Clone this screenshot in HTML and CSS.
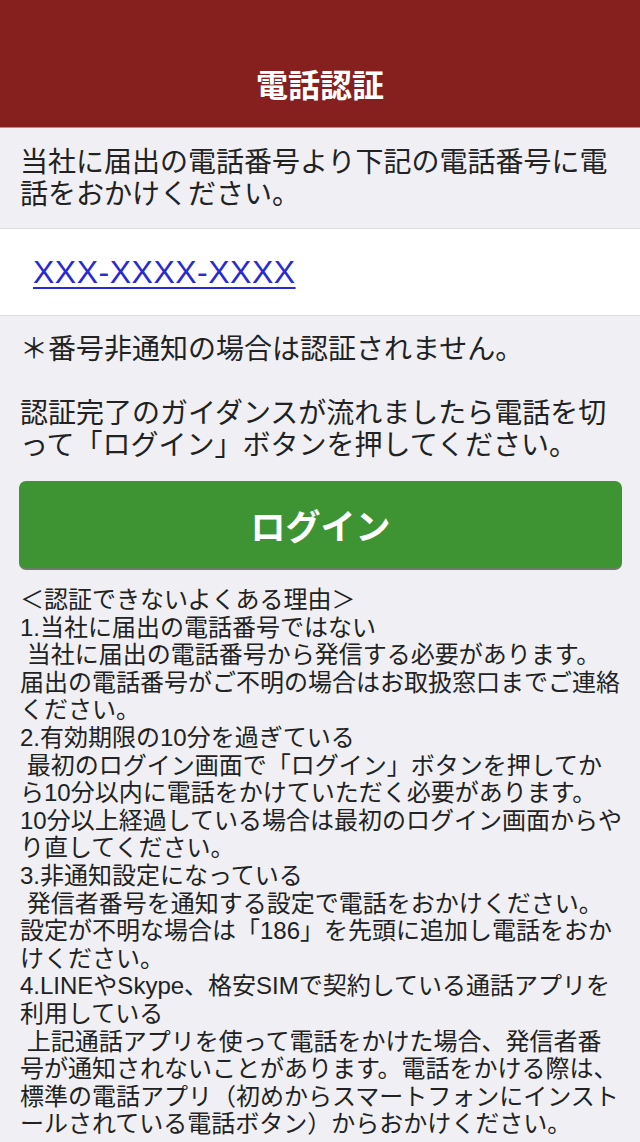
FILE: index.html
```html
<!DOCTYPE html>
<html lang="ja">
  <head>
    <meta charset="utf-8">
    <title>電話認証</title>
    <link rel="stylesheet" href="styles.css">
  </head>
  <body>
    <header class="header">
      <h1>電話認証</h1>
    </header>
    <section class="intro">
      <p>当社に届出の電話番号より下記の電話番号に電話をおかけください。</p>
    </section>
    <section class="tel">
      <a href="tel:XXX-XXXX-XXXX">XXX-XXXX-XXXX</a>
    </section>
    <section class="notice">
      <p>＊番号非通知の場合は認証されません。</p>
      <p class="guide">認証完了のガイダンスが流れましたら電話を切って「ログイン」ボタンを押してください。</p>
      <button class="login" type="button">ログイン</button>
      <div class="reasons">
        ＜認証できないよくある理由＞<br>
        1.当社に届出の電話番号ではない<br>
        &nbsp;当社に届出の電話番号から発信する必要があります。届出の電話番号がご不明の場合はお取扱窓口までご連絡ください。<br>
        2.有効期限の10分を過ぎている<br>
        &nbsp;最初のログイン画面で「ログイン」ボタンを押してから10分以内に電話をかけていただく必要があります。10分以上経過している場合は最初のログイン画面からやり直してください。<br>
        3.非通知設定になっている<br>
        &nbsp;発信者番号を通知する設定で電話をおかけください。設定が不明な場合は「186」を先頭に追加し電話をおかけください。<br>
        4.LINEやSkype、格安SIMで契約している通話アプリを利用している<br>
        &nbsp;上記通話アプリを使って電話をかけた場合、発信者番号が通知されないことがあります。電話をかける際は、標準の電話アプリ（初めからスマートフォンにインストールされている電話ボタン）からおかけください。
      </div>
    </section>
  </body>
</html>
```

FILE: styles.css
```css
html, body {
  margin: 0;
  padding: 0;
}

body {
  font-family: "Noto Sans CJK JP", "Liberation Sans", sans-serif;
  background: #efeff4;
  color: #222;
  line-break: normal;
}

p {
  margin: 0;
}

.header {
  height: 88px;
  padding-top: 39px;
  background: #85201f;
  border-bottom: 1px solid #b98a8a;
  display: flex;
  align-items: center;
  justify-content: center;
}

.header h1 {
  margin: 0;
  color: #fff;
  font-size: 32px;
  font-weight: bold;
  line-height: 1;
}

.intro {
  padding: 16px 20px 20px;
  font-size: 28px;
  line-height: 32px;
  border-bottom: 1px solid #dcdce0;
}

.tel {
  background: #fff;
  height: 86px;
  padding: 0 33px;
  display: flex;
  align-items: center;
  border-bottom: 1px solid #dcdce0;
}

.tel a {
  font-family: "Liberation Sans", sans-serif;
  font-size: 32px;
  letter-spacing: 0.5px;
  color: #2a2ad4;
  text-decoration-thickness: 2px;
  text-underline-offset: 4px;
}

.notice {
  padding: 15px 18px 0 20px;
  font-size: 28px;
  line-height: 32px;
}

.guide {
  margin-top: 32px;
}

.login {
  display: block;
  width: calc(100% + 1px);
  margin: 22px 0 0 -1px;
  height: 87px;
  border: none;
  border-radius: 7px;
  background: #3e9433;
  box-shadow: 0 2px 0 #6e7d6a;
  color: #fff;
  font-family: inherit;
  font-size: 35px;
  font-weight: bold;
}

.reasons {
  margin-top: 18px;
  font-family: "Liberation Sans", "Noto Sans CJK JP", sans-serif;
  font-size: 24px;
  line-height: 27.6px;
}
```
